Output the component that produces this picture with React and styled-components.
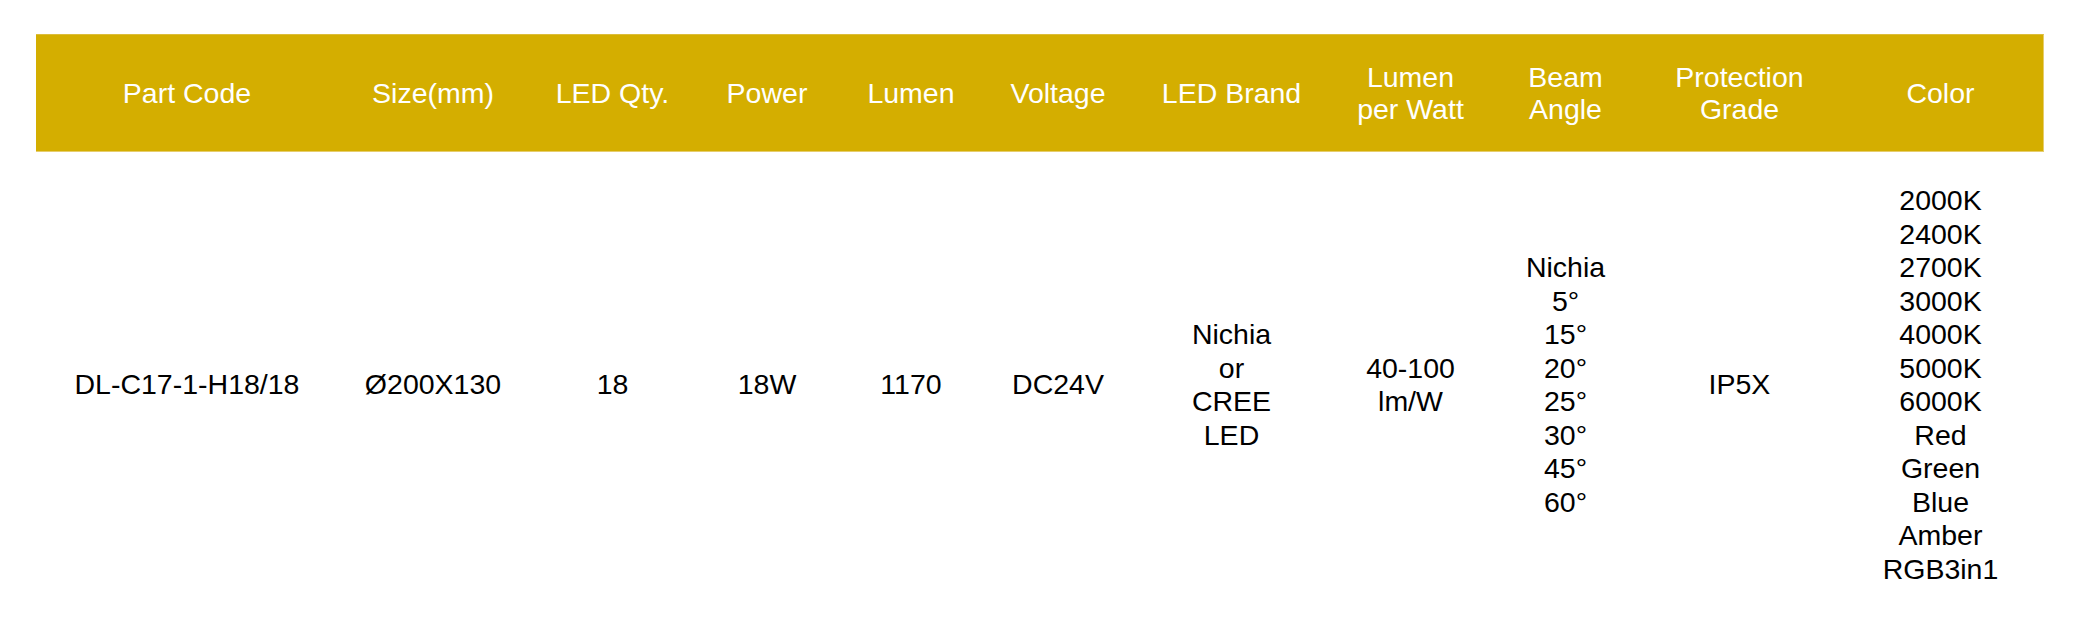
import React from "react";
import styled, { createGlobalStyle } from "styled-components";

const GlobalStyle = createGlobalStyle`
  html, body {
    margin: 0;
    padding: 0;
    background: #ffffff;
  }
  body {
    font-family: "Liberation Sans", Arial, sans-serif;
  }
`;

const Page = styled.div`
  padding: 34px 29px 0 36px;
  width: 2008px;
`;

const Table = styled.div`
  display: flex;
  flex-direction: column;
  width: 2008px;
`;

const COLS = "302px 190px 169px 140px 148px 146px 201px 157px 153px 195px 207px";

const HeaderRow = styled.div`
  display: grid;
  grid-template-columns: ${COLS};
  height: 118px;
  box-sizing: border-box;
  background: #d4ae00;
  border-top: 1px solid #dcbd3a;
  border-right: 1px solid #e6cd6c;
  border-bottom: 1px solid #e6cd6c;
`;

const BodyRow = styled.div`
  display: grid;
  grid-template-columns: ${COLS};
  padding: 32px 0 34px;
  background: #ffffff;
`;

const Cell = styled.div`
  display: flex;
  flex-direction: column;
  align-items: center;
  justify-content: center;
  text-align: center;
  font-size: 28.5px;
  line-height: ${(p) => (p.$head ? "32.5px" : "33.5px")};
  white-space: nowrap;
  color: ${(p) => (p.$head ? "#ffffff" : "#000000")};
`;

const Line = styled.span`
  display: block;
`;

const headers = [
  ["Part Code"],
  ["Size(mm)"],
  ["LED Qty."],
  ["Power"],
  ["Lumen"],
  ["Voltage"],
  ["LED Brand"],
  ["Lumen", "per Watt"],
  ["Beam", "Angle"],
  ["Protection", "Grade"],
  ["Color"],
];

const row = [
  ["DL-C17-1-H18/18"],
  ["Ø200X130"],
  ["18"],
  ["18W"],
  ["1170"],
  ["DC24V"],
  ["Nichia", "or", "CREE", "LED"],
  ["40-100", "lm/W"],
  ["Nichia", "5°", "15°", "20°", "25°", "30°", "45°", "60°"],
  ["IP5X"],
  [
    "2000K",
    "2400K",
    "2700K",
    "3000K",
    "4000K",
    "5000K",
    "6000K",
    "Red",
    "Green",
    "Blue",
    "Amber",
    "RGB3in1",
  ],
];

export default function App() {
  return (
    <>
      <GlobalStyle />
      <Page>
        <Table>
          <HeaderRow>
            {headers.map((lines, i) => (
              <Cell key={i} $head>
                {lines.map((l, j) => (
                  <Line key={j}>{l}</Line>
                ))}
              </Cell>
            ))}
          </HeaderRow>
          <BodyRow>
            {row.map((lines, i) => (
              <Cell key={i}>
                {lines.map((l, j) => (
                  <Line key={j}>{l}</Line>
                ))}
              </Cell>
            ))}
          </BodyRow>
        </Table>
      </Page>
    </>
  );
}
